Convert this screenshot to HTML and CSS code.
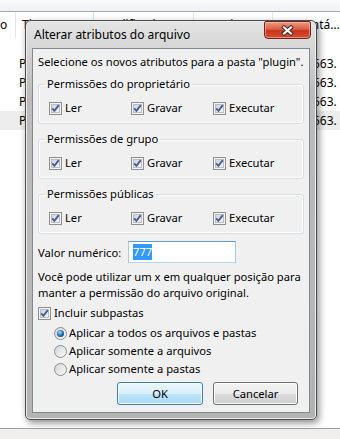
FILE: index.html
```html
<!DOCTYPE html>
<html lang="pt-BR">
<head>
    <meta charset="UTF-8">
    <meta name="viewport" content="width=device-width, initial-scale=1.0">
    <title>Alterar atributos do arquivo</title>
    <link rel="stylesheet" href="styles.css">
</head>
<body>
    <svg class="defs" width="0" height="0">
        <defs>
            <linearGradient id="cbg" x1="0" y1="0" x2="1" y2="1">
                <stop offset="0" stop-color="#cdd1d6"/>
                <stop offset="1" stop-color="#f7f7f7"/>
            </linearGradient>
            <linearGradient id="rbg" x1="0" y1="0" x2="1" y2="1">
                <stop offset="0" stop-color="#d2d4d6"/>
                <stop offset="1" stop-color="#fbfbfb"/>
            </linearGradient>
            <radialGradient id="rdot" cx="0.4" cy="0.35" r="0.7">
                <stop offset="0" stop-color="#b8e6fb"/>
                <stop offset="0.45" stop-color="#3d8bc8"/>
                <stop offset="1" stop-color="#17466f"/>
            </radialGradient>
        </defs>
    </svg>

    <!-- janela do explorador por trás do diálogo -->
    <div class="explorer">
        <div class="toolbar"></div>
        <div class="colheads">
            <div class="col c0">o</div>
            <div class="col c1">Tipo</div>
            <div class="col c2">Modificado</div>
            <div class="col c3">Permissões</div>
            <div class="col c4">Comentários do arquivo</div>
        </div>
        <div class="rows">
            <div class="row"><span class="name"></span><span class="type">Pasta</span><span class="size">563.</span></div>
            <div class="row"><span class="name"></span><span class="type">Pasta</span><span class="size">563.</span></div>
            <div class="row"><span class="name"></span><span class="type">Pasta</span><span class="size">563.</span></div>
            <div class="row hl"><span class="name"></span><span class="type">Pasta</span><span class="size">563.</span></div>
        </div>
        <div class="status"></div>
    </div>

    <div class="dialog">
        <div class="titlebar">
            <span class="title">Alterar atributos do arquivo</span>
            <button class="close" title="Fechar">
                <svg width="13" height="11" viewBox="0 0 13 11">
                    <path d="M3 2.5 L10 8.5 M10 2.5 L3 8.5" stroke="#3a2a26" stroke-width="4" stroke-linecap="square"/>
                    <path d="M3 2.5 L10 8.5 M10 2.5 L3 8.5" stroke="#ffffff" stroke-width="2.2" stroke-linecap="square"/>
                </svg>
            </button>
        </div>

        <div class="body">
            <p class="intro">Selecione os novos atributos para a pasta "plugin".</p>

            <fieldset class="group">
                <legend>Permissões do proprietário</legend>
                <div class="perms">
                    <label class="check"><svg class="cb" width="13" height="13" viewBox="0 0 13 13"><rect x="0.5" y="0.5" width="12" height="12" fill="#f4f4f4" stroke="#8e8f8f"/><rect x="2.5" y="2.5" width="8" height="8" fill="url(#cbg)" stroke="#b9bec4"/><path d="M3.2 6.4 L5.4 8.8 L9.8 3.2" fill="none" stroke="#4a5c96" stroke-width="1.9"/></svg><span>Ler</span></label>
                    <label class="check"><svg class="cb" width="13" height="13" viewBox="0 0 13 13"><rect x="0.5" y="0.5" width="12" height="12" fill="#f4f4f4" stroke="#8e8f8f"/><rect x="2.5" y="2.5" width="8" height="8" fill="url(#cbg)" stroke="#b9bec4"/><path d="M3.2 6.4 L5.4 8.8 L9.8 3.2" fill="none" stroke="#4a5c96" stroke-width="1.9"/></svg><span>Gravar</span></label>
                    <label class="check"><svg class="cb" width="13" height="13" viewBox="0 0 13 13"><rect x="0.5" y="0.5" width="12" height="12" fill="#f4f4f4" stroke="#8e8f8f"/><rect x="2.5" y="2.5" width="8" height="8" fill="url(#cbg)" stroke="#b9bec4"/><path d="M3.2 6.4 L5.4 8.8 L9.8 3.2" fill="none" stroke="#4a5c96" stroke-width="1.9"/></svg><span>Executar</span></label>
                </div>
            </fieldset>

            <fieldset class="group">
                <legend>Permissões de grupo</legend>
                <div class="perms">
                    <label class="check"><svg class="cb" width="13" height="13" viewBox="0 0 13 13"><rect x="0.5" y="0.5" width="12" height="12" fill="#f4f4f4" stroke="#8e8f8f"/><rect x="2.5" y="2.5" width="8" height="8" fill="url(#cbg)" stroke="#b9bec4"/><path d="M3.2 6.4 L5.4 8.8 L9.8 3.2" fill="none" stroke="#4a5c96" stroke-width="1.9"/></svg><span>Ler</span></label>
                    <label class="check"><svg class="cb" width="13" height="13" viewBox="0 0 13 13"><rect x="0.5" y="0.5" width="12" height="12" fill="#f4f4f4" stroke="#8e8f8f"/><rect x="2.5" y="2.5" width="8" height="8" fill="url(#cbg)" stroke="#b9bec4"/><path d="M3.2 6.4 L5.4 8.8 L9.8 3.2" fill="none" stroke="#4a5c96" stroke-width="1.9"/></svg><span>Gravar</span></label>
                    <label class="check"><svg class="cb" width="13" height="13" viewBox="0 0 13 13"><rect x="0.5" y="0.5" width="12" height="12" fill="#f4f4f4" stroke="#8e8f8f"/><rect x="2.5" y="2.5" width="8" height="8" fill="url(#cbg)" stroke="#b9bec4"/><path d="M3.2 6.4 L5.4 8.8 L9.8 3.2" fill="none" stroke="#4a5c96" stroke-width="1.9"/></svg><span>Executar</span></label>
                </div>
            </fieldset>

            <fieldset class="group">
                <legend>Permissões públicas</legend>
                <div class="perms">
                    <label class="check"><svg class="cb" width="13" height="13" viewBox="0 0 13 13"><rect x="0.5" y="0.5" width="12" height="12" fill="#f4f4f4" stroke="#8e8f8f"/><rect x="2.5" y="2.5" width="8" height="8" fill="url(#cbg)" stroke="#b9bec4"/><path d="M3.2 6.4 L5.4 8.8 L9.8 3.2" fill="none" stroke="#4a5c96" stroke-width="1.9"/></svg><span>Ler</span></label>
                    <label class="check"><svg class="cb" width="13" height="13" viewBox="0 0 13 13"><rect x="0.5" y="0.5" width="12" height="12" fill="#f4f4f4" stroke="#8e8f8f"/><rect x="2.5" y="2.5" width="8" height="8" fill="url(#cbg)" stroke="#b9bec4"/><path d="M3.2 6.4 L5.4 8.8 L9.8 3.2" fill="none" stroke="#4a5c96" stroke-width="1.9"/></svg><span>Gravar</span></label>
                    <label class="check"><svg class="cb" width="13" height="13" viewBox="0 0 13 13"><rect x="0.5" y="0.5" width="12" height="12" fill="#f4f4f4" stroke="#8e8f8f"/><rect x="2.5" y="2.5" width="8" height="8" fill="url(#cbg)" stroke="#b9bec4"/><path d="M3.2 6.4 L5.4 8.8 L9.8 3.2" fill="none" stroke="#4a5c96" stroke-width="1.9"/></svg><span>Executar</span></label>
                </div>
            </fieldset>

            <div class="numeric">
                <span class="numlabel">Valor numérico:</span>
                <div class="field"><span class="sel">777</span></div>
            </div>

            <p class="hint">Você pode utilizar um x em qualquer posição para<br>manter a permissão do arquivo original.</p>

            <label class="check sub"><svg class="cb" width="13" height="13" viewBox="0 0 13 13"><rect x="0.5" y="0.5" width="12" height="12" fill="#f4f4f4" stroke="#8e8f8f"/><rect x="2.5" y="2.5" width="8" height="8" fill="url(#cbg)" stroke="#b9bec4"/><path d="M3.2 6.4 L5.4 8.8 L9.8 3.2" fill="none" stroke="#4a5c96" stroke-width="1.9"/></svg><span>Incluir subpastas</span></label>

            <div class="radios">
                <label class="radio"><svg class="rb" width="13" height="13" viewBox="0 0 13 13"><circle cx="6.5" cy="6.5" r="6" fill="url(#rbg)" stroke="#8e8f8f"/><circle cx="6.5" cy="6.5" r="3.6" fill="url(#rdot)"/></svg><span>Aplicar a todos os arquivos e pastas</span></label>
                <label class="radio"><svg class="rb" width="13" height="13" viewBox="0 0 13 13"><circle cx="6.5" cy="6.5" r="6" fill="url(#rbg)" stroke="#8e8f8f"/></svg><span>Aplicar somente a arquivos</span></label>
                <label class="radio"><svg class="rb" width="13" height="13" viewBox="0 0 13 13"><circle cx="6.5" cy="6.5" r="6" fill="url(#rbg)" stroke="#8e8f8f"/></svg><span>Aplicar somente a pastas</span></label>
            </div>

            <div class="buttons">
                <button class="btn default ok">OK</button>
                <button class="btn cancel">Cancelar</button>
            </div>
        </div>
    </div>
</body>
</html>
```

FILE: styles.css
```css
body {
    margin: 0;
    font-family: "Noto Sans", "Liberation Sans", sans-serif;
    font-size: 11.2px;
    color: #000;
    background-color: #fff;
    overflow: hidden;
}
.defs {
    position: absolute;
    width: 0;
    height: 0;
}

/* explorador ao fundo */
.explorer {
    height: 439px;
    display: flex;
    flex-direction: column;
    font-size: 12px;
}
.toolbar {
    height: 11px;
    background: linear-gradient(#fbfbfb, #eff1f4);
    border-bottom: 1px solid #a3a8ae;
}
.colheads {
    display: flex;
    height: 26px;
    line-height: 26px;
    background-color: #fff;
}
.col {
    box-sizing: border-box;
    border-right: 1px solid #e4e7eb;
    padding-left: 6px;
    white-space: nowrap;
    overflow: hidden;
}
.c0 { width: 16px; padding-left: 0; }
.c1 { width: 78px; }
.c2 { width: 100px; }
.c3 { width: 79px; }
.c4 { flex: 1; border-right: none; text-overflow: ellipsis; }
.rows {
    padding-top: 16px;
}
.row {
    display: flex;
    height: 19px;
    line-height: 19px;
    white-space: nowrap;
}
.row.hl {
    background-color: #ededed;
}
.row .name { width: 19px; }
.row .type { flex: 1; overflow: hidden; }
.row .size { width: 27px; }
.status {
    margin-top: auto;
    height: 10px;
    border-top: 1px solid #a2a2a2;
    background-color: #f1eeee;
}

/* diálogo */
.dialog {
    position: absolute;
    left: 25px;
    top: 20px;
    width: 292px;
    height: 400px;
    box-sizing: border-box;
    display: flex;
    flex-direction: column;
    padding: 0 6px 6px;
    border: 1px solid #4c4c4c;
    border-radius: 6px 6px 5px 5px;
    background: linear-gradient(#e4e4e4 0, #d6d6d6 27px, #bdbdbd 70px, #b3b3b3 100%);
    box-shadow: inset 0 0 0 1px #ececec, 2px 3px 7px rgba(0, 0, 0, 0.45);
}
.titlebar {
    height: 27px;
    display: flex;
    justify-content: space-between;
    align-items: flex-start;
    padding-left: 2px;
}
.title {
    font-size: 12px;
    line-height: 27px;
}
.close {
    width: 47px;
    height: 18px;
    margin-right: -1px;
    padding: 0;
    display: flex;
    align-items: center;
    justify-content: center;
    border: 1px solid #6b2a21;
    border-radius: 2px 2px 4px 4px;
    background: linear-gradient(#eb9a84 0, #dc5f42 45%, #c8341b 55%, #d65036 100%);
    box-shadow: inset 0 0 0 1px rgba(255, 200, 190, 0.5);
}
.body {
    flex: 1;
    border: 1px solid #838790;
    background-color: #f0f0f0;
    padding-top: 5px;
}
.intro {
    margin: 0 0 6px;
    padding-left: 5px;
    line-height: 16px;
}
.group {
    margin: 0 5px 7px;
    padding: 8px 10px 7px;
    border: 1px solid #d5dfe5;
    border-radius: 3px;
    box-shadow: inset 0 0 0 1px #fff;
}
.group legend {
    margin-left: -4px;
    padding: 0 2px;
    line-height: 16px;
}
.perms {
    display: grid;
    grid-template-columns: 82px 82px auto;
}
.check,
.radio {
    display: flex;
    align-items: center;
    gap: 3px;
    height: 16px;
    line-height: 16px;
}
.cb,
.rb {
    display: block;
    flex: none;
}
.numeric {
    display: flex;
    align-items: center;
    padding-left: 5px;
}
.numlabel {
    width: 90px;
}
.field {
    width: 108px;
    height: 22px;
    box-sizing: border-box;
    padding: 2px 0 0 4px;
    border: 1px solid #7eb4ea;
    border-color: #5f9bd6 #a9c9ea #b7d3ee #a9c9ea;
    background-color: #fff;
}
.sel {
    display: inline-block;
    line-height: 16px;
    background-color: #3399ff;
    color: #fff;
}
.hint {
    margin: 6px 0 0;
    padding-left: 5px;
    line-height: 16px;
}
.sub {
    margin-top: 4px;
    padding-left: 5px;
}
.radios {
    margin-top: 3px;
    padding-left: 21px;
}
.radio {
    height: 18px;
    gap: 2px;
}
.buttons {
    display: flex;
    justify-content: flex-end;
    gap: 10px;
    margin-top: 4px;
    padding-right: 11px;
}
.btn {
    height: 23px;
    padding: 0;
    font: inherit;
    color: #000;
    border: 1px solid #707070;
    border-radius: 3px;
    background: linear-gradient(#f2f2f2 0, #ebebeb 50%, #dddddd 50%, #cfcfcf 100%);
    box-shadow: inset 0 0 0 1px #fcfcfc;
}
.btn.default {
    border-color: #3c7fb1;
    background: linear-gradient(#eaf6fd 0, #d9f0fc 50%, #bee6fd 50%, #a7d9f5 100%);
}
.ok { width: 86px; }
.cancel { width: 85px; }
```
